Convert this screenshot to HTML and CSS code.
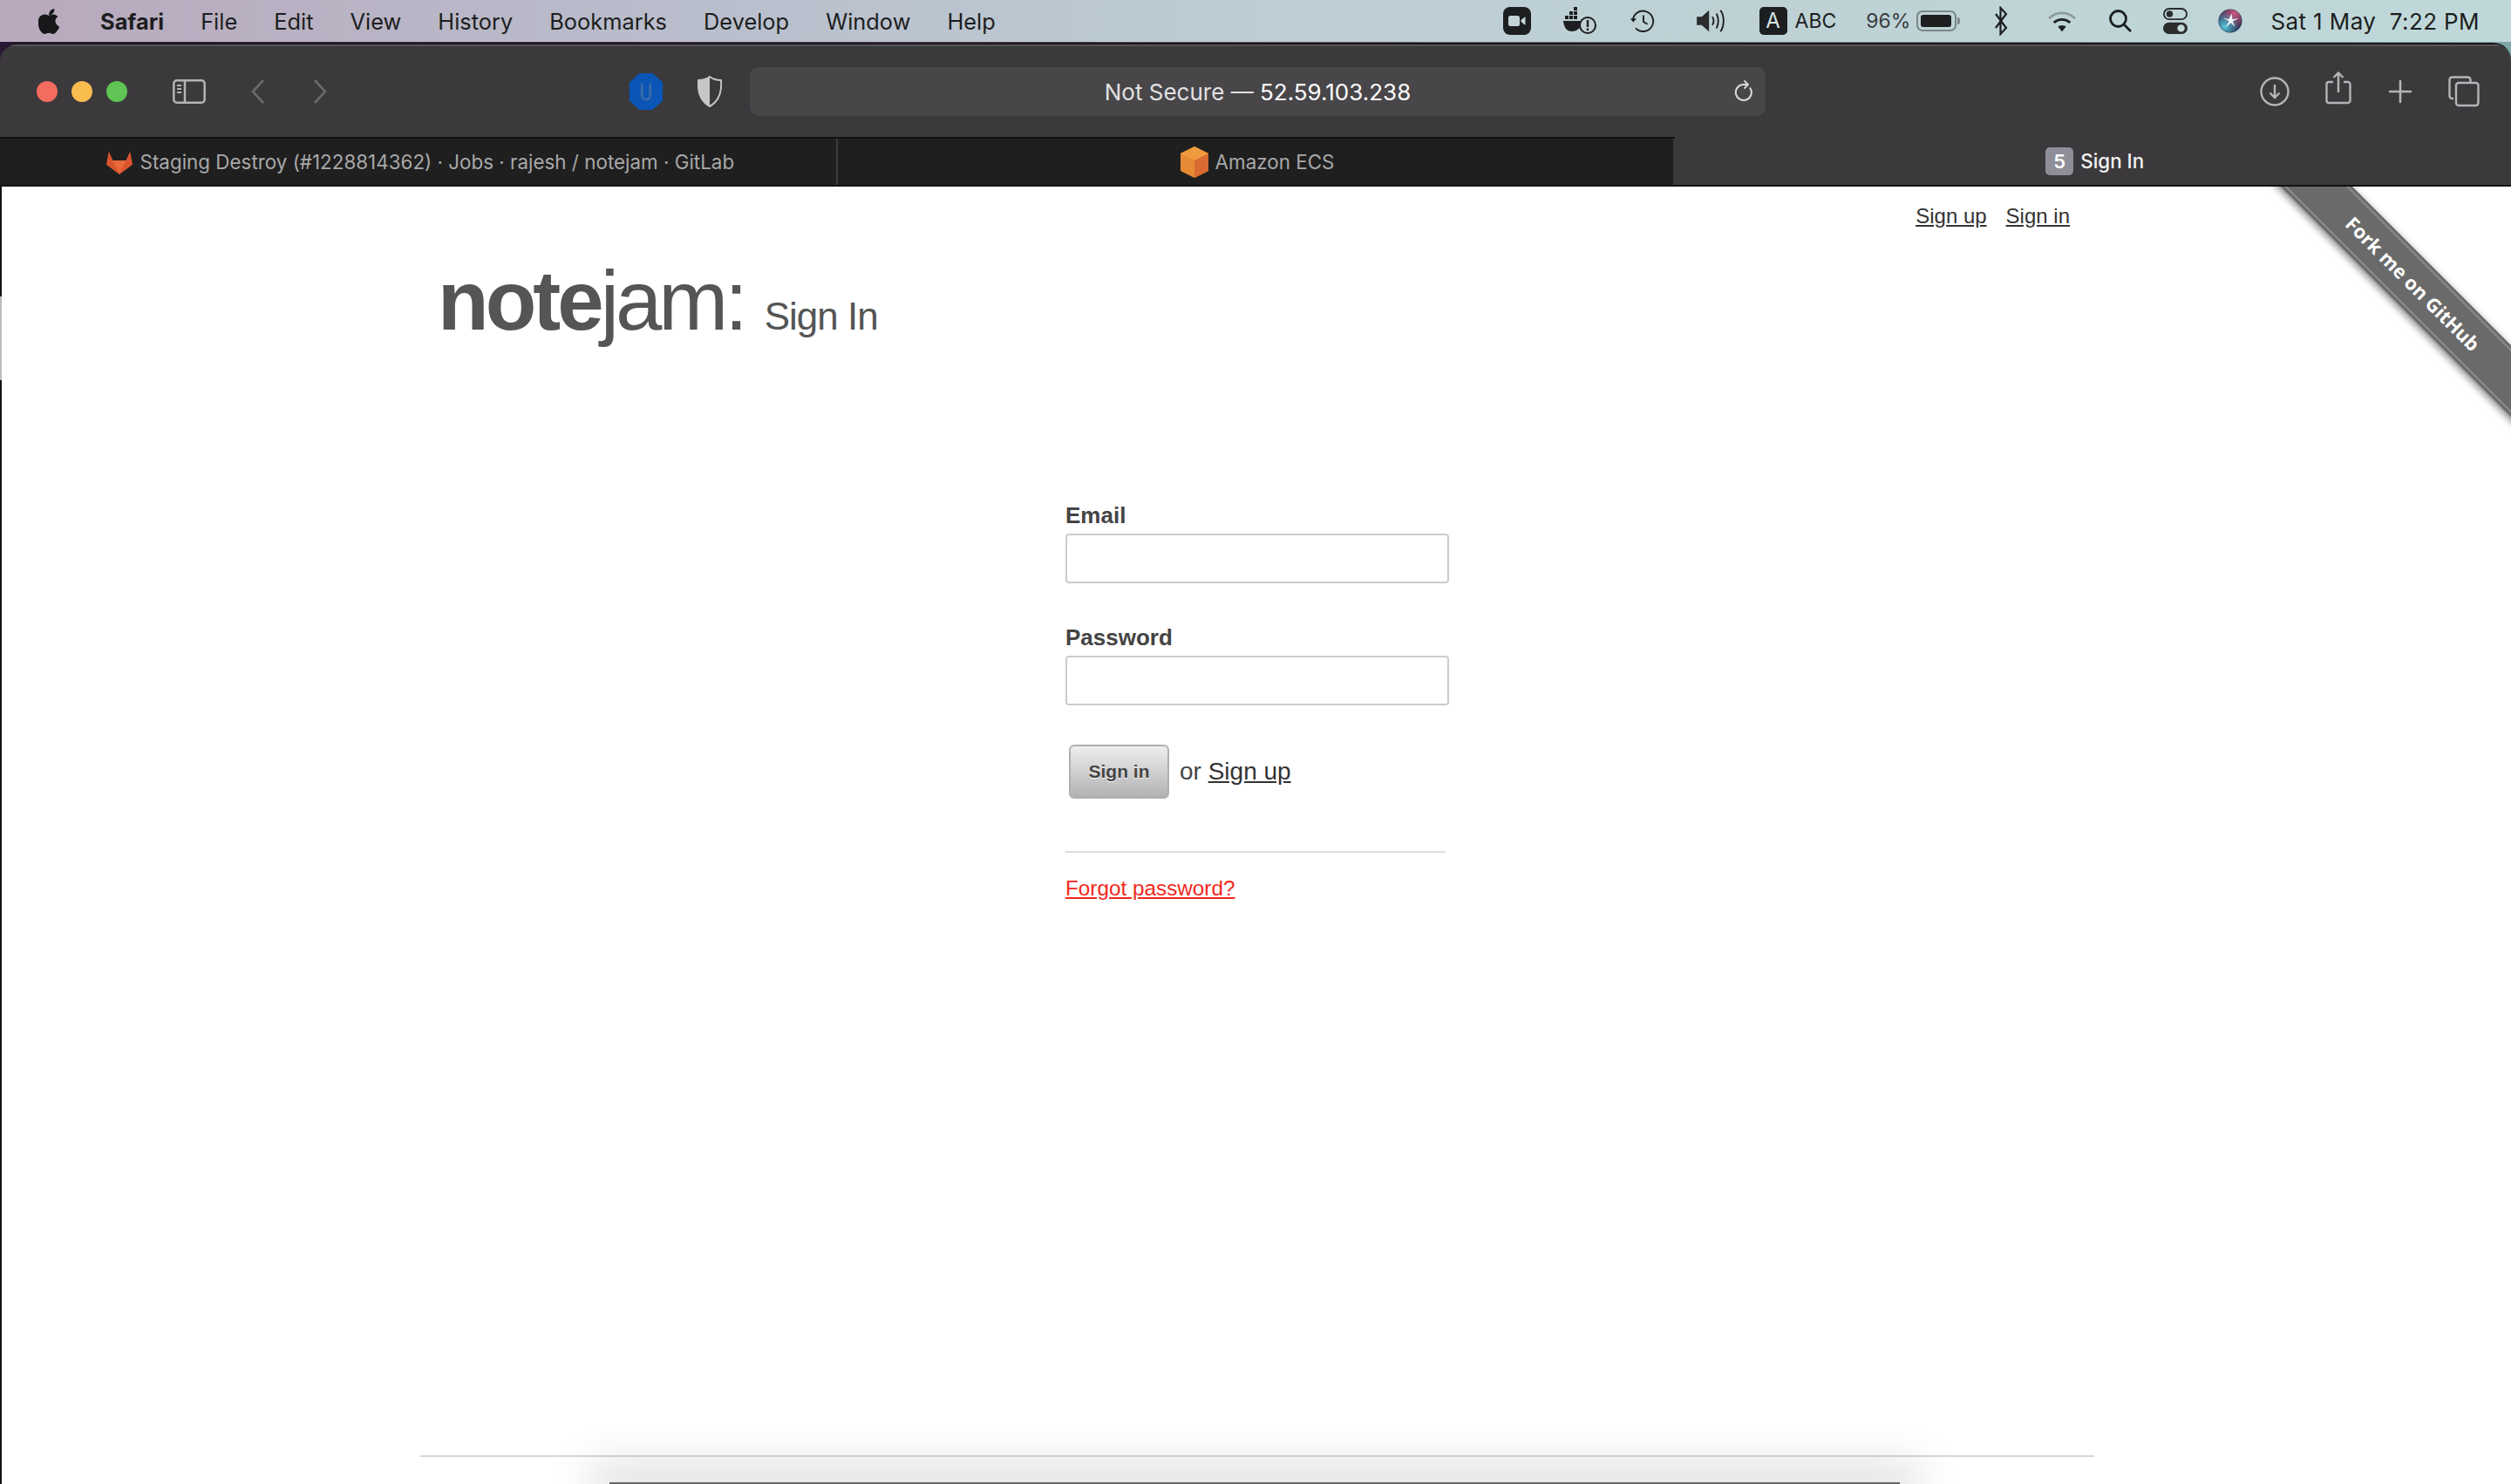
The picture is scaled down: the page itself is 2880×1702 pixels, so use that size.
FILE: index.html
```html
<!DOCTYPE html>
<html>
  <head>
    <meta charset="utf-8">
    <title>Sign In</title>
    <link rel="stylesheet" href="styles.css">
  </head>
  <body>
    <!-- mac menu bar -->
    <div class="menubar">
      <div class="menu-left">
        <svg class="apple" viewBox="0 0 24 28"><path d="M17 1c.2 2-.6 3.600-1.600 4.800-1 1.200-2.600 2.100-4.200 2-.2-1.800.6-3.600 1.600-4.700C13.900 1.900 15.600 1.100 17 1zM22.500 20.200c-.7 1.600-1.100 2.300-2 3.700-1.300 2-3 4.300-5.100 4-1.700-.2-2.300-1.100-4.300-1.100s-2.800.9-4.400 1.100c-2.100.2-3.700-2-5-3.900C-1.400 18.700-1 11.600 2 8.900c1.300-1.200 3-1.900 4.700-1.900 1.900 0 3.100 1.100 4.600 1.100s2.400-1.100 4.700-1.100c1.700 0 3.400.9 4.700 2.500-4.100 2.300-3.500 8.500 1.800 10.700z"/></svg>
        <span class="menu-item app-name">Safari</span>
        <span class="menu-item">File</span>
        <span class="menu-item">Edit</span>
        <span class="menu-item">View</span>
        <span class="menu-item">History</span>
        <span class="menu-item">Bookmarks</span>
        <span class="menu-item">Develop</span>
        <span class="menu-item">Window</span>
        <span class="menu-item">Help</span>
      </div>
      <div class="menu-right">
        <svg class="st st-zoom" viewBox="0 0 32 32"><rect width="32" height="32" rx="8" fill="#1c1e20"/><rect x="6" y="10" width="13" height="12" rx="2.500" fill="#c3d4d8"/><path d="M20.500 15l5-4v10l-5-4z" fill="#c3d4d8"/></svg>
        <svg class="st st-docker" viewBox="0 0 40 36"><g fill="#1c1e20"><rect x="13" y="2" width="4" height="4"/><rect x="13" y="7" width="4" height="4"/><rect x="8" y="7" width="4" height="4"/><rect x="8" y="12" width="4" height="4"/><rect x="3" y="12" width="4" height="4"/><rect x="13" y="12" width="4" height="4"/><path d="M1 18h20c1 0 2 1 1 3-2 6-6 9-11 9-6 0-9-4-10-12z"/></g><circle cx="29" cy="23" r="9" fill="#c0d0d6" stroke="#1c1e20" stroke-width="2"/><rect x="27.800" y="17" width="2.400" height="8" fill="#1c1e20"/><rect x="27.800" y="26.500" width="2.400" height="2.500" fill="#1c1e20"/></svg>
        <svg class="st st-time" viewBox="0 0 32 32" fill="none" stroke="#1c1e20" stroke-width="2"><path d="M4 16a12.500 12.500 0 1 1 3.500 9"/><path d="M1 13l3.500 4.500L8.500 13z" fill="#1c1e20" stroke="none"/><path d="M17 9v8l5 3"/></svg>
        <svg class="st st-vol" viewBox="0 0 40 32"><path d="M2 11h6l9-8v26l-9-8H2z" fill="#2a2c2e"/><g fill="none" stroke="#1c1e20" stroke-width="2"><path d="M21 11c2 3 2 7 0 10"/><path d="M26 7c3 5 3 13 0 18"/><path d="M31 3c5 7 5 19 0 26"/></g></svg>
        <span class="input-box">A</span>
        <span class="st-text st-abc">ABC</span>
        <span class="st-text st-pct">96%</span>
        <span class="battery"><span class="battery-fill"></span></span>
        <svg class="st st-bt" viewBox="0 0 18 34" fill="none" stroke="#1c1e20" stroke-width="2.200"><path d="M3 9l12 16-6.500 7V2L15 9 3 25"/></svg>
        <svg class="st st-wifi" viewBox="0 0 36 30" fill="none" stroke-width="3"><path d="M2 12c9-9 23-9 32 0" stroke="#8d9a9c"/><path d="M8 17c6-5 14-5 20 0" stroke="#1c1e20"/><path d="M18 28l-5-6c3-2 7-2 10 0z" fill="#1c1e20" stroke="none"/></svg>
        <svg class="st st-search" viewBox="0 0 28 28" fill="none" stroke="#1c1e20" stroke-width="2.800"><circle cx="11.500" cy="11.500" r="9"/><path d="M18 18l8 8"/></svg>
        <svg class="st st-cc" viewBox="0 0 30 32"><rect x="1" y="1" width="28" height="13" rx="6.500" fill="none" stroke="#2a2c2e" stroke-width="2"/><circle cx="8" cy="7.500" r="4" fill="#2a2c2e"/><rect y="18" width="30" height="14" rx="7" fill="#2a2c2e"/><circle cx="22" cy="25" r="4.500" fill="#c3d8d8"/></svg>
        <svg class="st st-siri" viewBox="0 0 30 30">
          <defs>
            <radialGradient id="siriTop" cx=".7" cy=".15" r=".7"><stop offset="0" stop-color="#d0557f"/><stop offset="1" stop-color="#d0557f" stop-opacity="0"/></radialGradient>
            <radialGradient id="siriLow" cx=".25" cy=".75" r=".65"><stop offset="0" stop-color="#4fc4d8"/><stop offset="1" stop-color="#4fc4d8" stop-opacity="0"/></radialGradient>
          </defs>
          <circle cx="15" cy="15" r="14.500" fill="#2c2f52"/>
          <circle cx="15" cy="15" r="14" fill="url(#siriTop)"/>
          <circle cx="15" cy="15" r="14" fill="url(#siriLow)"/>
          <path d="M17 6l.5 7 8-1.500-7.500 4 3 7-5-5-7 5.500 4.500-7.500L6 11l7 2z" fill="#f1f4fb"/>
        </svg>
        <span class="st-text st-date">Sat 1 May&nbsp; 7:22 PM</span>
      </div>
    </div>

    <div class="window">
      <div class="toolbar">
        <div class="lights">
          <span class="light red"></span>
          <span class="light yellow"></span>
          <span class="light green"></span>
        </div>
        <svg class="tool-sidebar" viewBox="0 0 38 28" fill="none" stroke="#b4b3b5" stroke-width="2.500"><rect x="1.300" y="1.300" width="35.400" height="25.400" rx="3.500"/><path d="M14 1v26"/><path d="M5 7h5M5 11h5M5 15h5" stroke-width="2"/></svg>
        <svg class="tool-chevron" viewBox="0 0 18 30" fill="none" stroke="#6a696b" stroke-width="2.600"><path d="M15 2L3 15l12 13"/></svg>
        <svg class="tool-chevron next" viewBox="0 0 18 30" fill="none" stroke="#6a696b" stroke-width="2.600"><path d="M3 2l12 13L3 28"/></svg>
        <svg class="tool-ublock" viewBox="0 0 40 44"><path d="M12 0h16l12 11v22L28 44H12L0 33V11z" fill="#0a55b5"/><path d="M15 12v15c0 6 10 6 10 0V12" fill="none" stroke="#3b6aa8" stroke-width="3"/></svg>
        <svg class="tool-shield" viewBox="0 0 28 36"><path d="M14 1c4 3 8 4 13 4 1 12-2 24-13 30C3 29 0 17 1 5c5 0 9-1 13-4z" fill="none" stroke="#c6c5c7" stroke-width="2"/><path d="M14 1C10 4 6 5 1 5c-1 12 2 24 13 30z" fill="#c6c5c7"/></svg>
        <div class="urlbar">
          <span class="url-text"><span class="url-dim">Not Secure —</span> 52.59.103.238</span>
          <svg class="reload" viewBox="0 0 24 28" fill="none" stroke="#dcdbdd" stroke-width="2"><path d="M18 9.500A9 9 0 1 1 10 6h5"/><path d="M11.500 1.500l4.500 4.500-4.500 4.500" stroke-width="1.800"/></svg>
        </div>
        <div class="tools-right">
          <svg class="tool-download" viewBox="0 0 34 34" fill="none" stroke="#b5b4b6" stroke-width="2.400"><circle cx="17" cy="17" r="15.500"/><path d="M17 9v15M11.500 18.500l5.500 5.500 5.500-5.500"/></svg>
          <svg class="tool-share" viewBox="0 0 30 38" fill="none" stroke="#b5b4b6" stroke-width="2.400"><path d="M9 12H4a2.500 2.500 0 0 0-2.500 2.500v19A2.500 2.500 0 0 0 4 36h22a2.500 2.500 0 0 0 2.500-2.500v-19A2.500 2.500 0 0 0 26 12h-5"/><path d="M15 24V2M9.500 7L15 1.500 20.500 7"/></svg>
          <svg class="tool-plus" viewBox="0 0 28 28" fill="none" stroke="#b5b4b6" stroke-width="2.600" stroke-linecap="round"><path d="M14 2v24M2 14h24"/></svg>
          <svg class="tool-tabs" viewBox="0 0 36 36" fill="none" stroke="#b5b4b6" stroke-width="2.400"><path d="M6 26H4.500a3 3 0 0 1-3-3V4.500a3 3 0 0 1 3-3h18a3 3 0 0 1 3 3V8"/><rect x="9" y="8" width="25.500" height="26" rx="3"/></svg>
        </div>
      </div>
      <div class="tabbar">
        <div class="tab">
          <svg class="fav-gitlab" viewBox="0 0 34 30"><path d="M17 30L1 18 4 2l5 11h16l5-11 3 16z" fill="#d9552f"/><path d="M17 30l-8-17h16z" fill="#e8683a"/></svg>
          <span>Staging Destroy (#1228814362) · Jobs · rajesh / notejam · GitLab</span>
        </div>
        <div class="tab">
          <svg class="fav-ecs" viewBox="0 0 32 36"><path d="M16 0l16 8v20l-16 8-16-8V8z" fill="#e78a35"/><path d="M16 16l16-8v20l-16 8z" fill="#d86a32"/><path d="M16 0l16 8-16 8L0 8z" fill="#f09a3e"/></svg>
          <span>Amazon ECS</span>
        </div>
        <div class="tab active">
          <span class="fav-five">5</span>
          <span>Sign In</span>
        </div>
      </div>

      <div class="page">
        <div class="edge-strip"></div>
        <a class="ribbon" href="#"><span class="ribbon-inner">Fork me on GitHub</span></a>
        <div class="container">
          <div class="auth-links">
            <a href="#">Sign up</a>
            <a href="#">Sign in</a>
          </div>
          <h1 class="logo"><strong>note</strong>jam: <span class="logo-sub">Sign In</span></h1>
          <form class="signin-form">
            <label for="email">Email</label>
            <input id="email" type="text">
            <label class="second" for="password">Password</label>
            <input id="password" type="password">
            <div class="form-actions">
              <button type="button">Sign in</button>
              <span class="or-text">or <a href="#">Sign up</a></span>
            </div>
            <hr class="form-line">
            <a class="forgot" href="#">Forgot password?</a>
          </form>
          <div class="footer-line"></div>
        </div>
        <div class="dock-edge"></div>
      </div>
    </div>
  </body>
</html>
```

FILE: styles.css
```css
html, body {
  margin: 0;
  height: 1702px;
  overflow: hidden;
}

body {
  display: flex;
  flex-direction: column;
  font-family: Inter, "Liberation Sans", sans-serif;
  background: linear-gradient(90deg, #2b1638 0%, #5a3a55 40%, #7fa6a8 100%);
}

/* menu bar */
.menubar {
  height: 48px;
  flex: none;
  display: flex;
  justify-content: space-between;
  align-items: center;
  background: linear-gradient(90deg, #b9a8bc 0%, #b9bccb 25%, #bccdd3 50%, #c0d8d9 100%);
  color: #1c1e20;
  font-size: 25.400px;
}

.menu-left {
  display: flex;
  align-items: center;
  gap: 42px;
  padding-left: 44px;
}

.apple {
  width: 26px;
  height: 30px;
  fill: #17181a;
  margin-right: 3px;
}

.app-name {
  font-weight: 700;
}

.menu-right {
  display: flex;
  align-items: center;
  padding-right: 36px;
}

.st { flex: none; }
.st-zoom { width: 32px; height: 32px; margin-right: 36px; }
.st-docker { width: 40px; height: 36px; margin-right: 37px; }
.st-time { width: 30px; height: 30px; margin-right: 44px; }
.st-vol { width: 40px; height: 30px; margin-right: 35px; }

.input-box {
  width: 32px;
  height: 32px;
  border-radius: 5px;
  background: #1c1e20;
  color: #d8e4e6;
  font-size: 24px;
  text-align: center;
  line-height: 32px;
  margin-right: 9px;
}

.st-text {
  font-size: 23px;
  white-space: nowrap;
}

.st-abc { margin-right: 34px; }
.st-pct { margin-right: 7px; color: #3a3d40; }

.battery {
  position: relative;
  width: 46px;
  height: 24px;
  border: 2px solid #7b8688;
  border-radius: 7px;
  padding: 3px;
  box-sizing: border-box;
  margin-right: 42px;
}

.battery::after {
  content: "";
  position: absolute;
  right: -6px;
  top: 6px;
  width: 3px;
  height: 8px;
  border-radius: 0 3px 3px 0;
  background: #7b8688;
}

.battery-fill {
  display: block;
  width: 96%;
  height: 100%;
  border-radius: 3px;
  background: #1c1e20;
}

.st-bt { width: 18px; height: 34px; margin-right: 44px; }
.st-wifi { width: 34px; height: 28px; margin-right: 36px; }
.st-search { width: 28px; height: 28px; margin-right: 35px; }
.st-cc { width: 28px; height: 30px; margin-right: 35px; }
.st-siri { width: 28px; height: 30px; margin-right: 32px; }

.st-date {
  font-size: 26px;
  letter-spacing: .4px;
}

/* browser window */
.window {
  flex: 1;
  display: flex;
  flex-direction: column;
  margin-top: 1px;
  border-radius: 20px 20px 0 0;
  border-top: 2px solid #1a191b;
  overflow: hidden;
}

.toolbar {
  height: 106px;
  flex: none;
  display: flex;
  align-items: center;
  background: #3b393c;
  border-top: 2px solid #555356;
  box-sizing: border-box;
  position: relative;
}

.lights {
  display: flex;
  gap: 16px;
  margin-left: 42px;
}

.light {
  width: 24px;
  height: 24px;
  border-radius: 50%;
}

.red { background: #f46b60; }
.yellow { background: #f8bd4e; }
.green { background: #5fc454; }

.tool-sidebar { width: 38px; height: 28px; margin-left: 52px; }
.tool-chevron { width: 18px; height: 30px; margin-left: 51px; }
.tool-chevron.next { margin-left: 53px; }
.tool-ublock { width: 40px; height: 42px; margin-left: 345px; }
.tool-shield { width: 28px; height: 36px; margin-left: 39px; }

.urlbar {
  width: 1165px;
  height: 56px;
  margin-left: 32px;
  border-radius: 10px;
  background: #484649;
  display: flex;
  align-items: center;
  justify-content: center;
  position: relative;
}

.url-text {
  color: #fff;
  font-size: 26px;
}

.url-dim {
  color: #e2e1e3;
}

.reload {
  position: absolute;
  right: 12px;
  top: 14px;
  width: 24px;
  height: 28px;
}

.tools-right {
  display: flex;
  align-items: center;
  margin-left: 567px;
}

.tool-download { width: 34px; height: 34px; }
.tool-share { width: 30px; height: 38px; margin-left: 41px; margin-top: -8px; }
.tool-plus { width: 28px; height: 28px; margin-left: 42px; }
.tool-tabs { width: 36px; height: 36px; margin-left: 41px; }

/* tabs */
.tabbar {
  height: 57px;
  flex: none;
  display: flex;
  background: #1f1f1f;
  border-top: 2px solid #111;
  border-bottom: 2px solid #111;
  box-sizing: border-box;
  color: #a8a8a9;
  font-size: 22.400px;
}

.tab {
  flex: 1;
  display: flex;
  align-items: center;
  justify-content: center;
  gap: 8px;
  padding-left: 4px;
  border-right: 2px solid #3c3b3d;
}

.tab.active {
  background: #3b393c;
  color: #f2f2f2;
  border-right: 0;
  margin-top: -2px;
  font-weight: 500;
}

.fav-gitlab { width: 32px; height: 30px; }
.fav-ecs { width: 32px; height: 36px; }

.fav-five {
  width: 32px;
  height: 32px;
  border-radius: 5px;
  background: #8e8e98;
  color: #fff;
  font-size: 22px;
  font-weight: 600;
  text-align: center;
  line-height: 32px;
}

/* the page itself */
.page {
  flex: 1;
  position: relative;
  background: #fff;
  border-left: 2px solid #141414;
  clip-path: inset(0 0 0 -2px);
  font-family: "Liberation Sans", Arial, sans-serif;
  color: #444;
}

.edge-strip {
  position: absolute;
  left: -2px;
  top: 126px;
  width: 2px;
  height: 96px;
  background: #bbb;
}

.container {
  width: 1920px;
  height: 100%;
  margin-left: 480px;
  display: flex;
  flex-direction: column;
  box-sizing: border-box;
  position: relative;
}

.auth-links {
  display: flex;
  justify-content: flex-end;
  gap: 22px;
  padding: 19px 28px 0 0;
  font-size: 24px;
  line-height: 30px;
}

.auth-links a, .or-text a {
  color: #333;
}

.logo {
  margin: 27px 0 0 20px;
  font-size: 96px;
  line-height: 110px;
  font-weight: normal;
  color: #555;
  letter-spacing: -4px;
}

.logo strong {
  font-weight: bold;
}

.logo-sub {
  font-size: 44px;
  letter-spacing: -1px;
}

.signin-form {
  width: 440px;
  margin: 158px 0 0 740px;
}

.signin-form label {
  display: block;
  font-size: 26px;
  font-weight: bold;
  line-height: 30px;
  margin-bottom: 6px;
}

.signin-form label.second {
  margin-top: 47px;
}

.signin-form input {
  display: block;
  width: 440px;
  height: 57px;
  box-sizing: border-box;
  border: 2px solid #ccc;
  border-radius: 4px;
  background: #fff;
  outline: none;
}

.form-actions {
  display: flex;
  align-items: center;
  gap: 12px;
  margin: 45px 0 0 4px;
}

.form-actions button {
  width: 115px;
  height: 62px;
  border: 2px solid #b0b0b0;
  border-radius: 6px;
  background: linear-gradient(#eeeeee, #b2b2b2);
  color: #444;
  font-family: "Liberation Sans", Arial, sans-serif;
  font-size: 21px;
  font-weight: bold;
  text-shadow: 0 1px 1px #fff;
}

.or-text {
  font-size: 28px;
}

.form-line {
  width: 436px;
  height: 2px;
  border: 0;
  margin: 60px 0 0;
  background: #ddd;
}

.forgot {
  display: block;
  margin-top: 26px;
  font-size: 24.300px;
  line-height: 30px;
  color: #f0291c;
}

.footer-line {
  height: 2px;
  background: #d8d8d8;
  margin-top: auto;
  margin-bottom: 31px;
}

.dock-edge {
  position: absolute;
  left: 697px;
  width: 1480px;
  bottom: 0;
  height: 2px;
  background: #666;
  box-shadow: 0 0 50px 22px rgba(0, 0, 0, .13);
}

/* corner ribbon */
.ribbon {
  position: absolute;
  z-index: 2;
  top: 82px;
  left: 2466px;
  width: 600px;
  height: 58px;
  transform: rotate(45deg);
  background: #6a6a6a;
  box-shadow: 0 3px 8px rgba(0, 0, 0, .5);
  color: #fff;
  text-decoration: none;
  font-family: "Open Sans", "Liberation Sans", sans-serif;
  display: flex;
  align-items: center;
  justify-content: center;
}

.ribbon-inner {
  width: 100%;
  line-height: 48px;
  text-align: center;
  font-size: 22px;
  font-weight: 700;
  border-top: 2px solid #8c8c8c;
  border-bottom: 2px solid #8c8c8c;
}
```
